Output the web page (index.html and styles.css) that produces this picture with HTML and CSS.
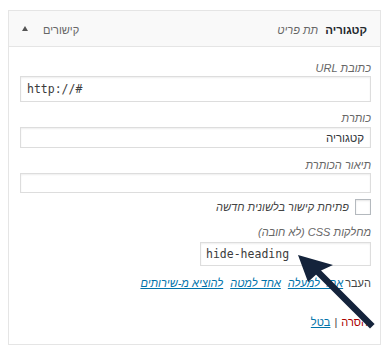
FILE: index.html
```html
<!DOCTYPE html>
<html lang="he">
<head>
<meta charset="utf-8">
<link rel="stylesheet" href="styles.css">
</head>
<body>
<div class="page">
  <div class="menu-item" dir="rtl">
    <div class="handle">
      <span class="item-title"><span class="item-name">קטגוריה</span><span class="item-sub">תת פריט</span></span>
      <span class="item-controls"><span class="item-type">קישורים</span><span class="toggle"></span></span>
    </div>
    <div class="settings">
      <div class="field">
        <label class="label">כתובת URL</label>
        <div class="input input-url mono">http://#</div>
      </div>
      <div class="field">
        <label class="label">כותרת</label>
        <div class="input input-title">קטגוריה</div>
      </div>
      <div class="field">
        <label class="label">תיאור הכותרת</label>
        <div class="input input-desc"></div>
      </div>
      <div class="check-row">
        <span class="checkbox"></span>
        <span class="check-label">פתיחת קישור בלשונית חדשה</span>
      </div>
      <div class="field">
        <label class="label">מחלקות CSS (לא חובה)</label>
        <div class="input input-css mono">hide-heading</div>
      </div>
      <div class="move-row">
        <span class="move-label">העבר</span>
        <a class="move-link">אחד למעלה</a>
        <a class="move-link">אחד למטה</a>
        <a class="move-link">להוציא מ-שירותים</a>
      </div>
      <div class="actions">
        <a class="delete">הסרה</a>
        <span class="sep">|</span>
        <a class="cancel">בטל</a>
      </div>
    </div>
  </div>
  <svg class="arrow" width="389" height="358" viewBox="0 0 389 358" xmlns="http://www.w3.org/2000/svg">
    <line x1="316" y1="270" x2="370" y2="324" stroke="#14233b" stroke-width="6.5" stroke-linecap="square"/>
    <polygon points="298,255 333,265 320,271 308,282" fill="#14233b"/>
  </svg>
</div>
</body>
</html>
```

FILE: styles.css
```css
html, body {
  margin: 0;
  padding: 0;
  background: #ffffff;
}

body {
  font-family: "Liberation Sans", Arial, sans-serif;
  font-size: 11px;
  color: #444;
}

.page {
  position: relative;
  width: 389px;
  height: 358px;
  padding: 10px 0 0 8px;
  box-sizing: border-box;
  direction: ltr;
}

.menu-item {
  width: 373px;
  direction: rtl;
}

.handle {
  display: flex;
  justify-content: space-between;
  align-items: center;
  height: 37px;
  box-sizing: border-box;
  padding: 2px 13px 0 13px;
  background: #f9f9f9;
  border: 1px solid #e5e5e5;
  line-height: 16px;
}

.item-title {
  display: flex;
  gap: 7px;
  align-items: baseline;
}

.item-name {
  font-weight: bold;
  color: #23282d;
  font-size: 11.5px;
}

.item-sub {
  font-style: italic;
  color: #666;
}

.item-controls {
  display: flex;
  align-items: center;
  gap: 15px;
}

.item-type {
  color: #666;
}

.toggle {
  width: 0;
  height: 0;
  border-left: 3.5px solid transparent;
  border-right: 3.5px solid transparent;
  border-bottom: 5px solid #555;
  margin-bottom: 2px;
}

.settings {
  height: 298px;
  box-sizing: border-box;
  border: 1px solid #e5e5e5;
  border-top: none;
  padding: 13px 9px 0 11px;
}

.field {
  display: flex;
  flex-direction: column;
  align-items: flex-start;
}

.label {
  display: block;
  font-style: italic;
  color: #666;
  line-height: 16px;
}

.input {
  box-sizing: border-box;
  border: 1px solid #ddd;
  box-shadow: inset 0 1px 2px rgba(0, 0, 0, 0.07);
  background: #fff;
  color: #32373c;
  padding: 0 6px;
  display: flex;
  align-items: center;
  width: 351px;
}

.mono {
  font-family: "DejaVu Sans Mono", "Liberation Mono", monospace;
  font-size: 11.5px;
  color: #3c3c3c;
  direction: ltr;
  justify-content: flex-start;
}

.input-url {
  height: 26px;
  margin-bottom: 8px;
}

.input-title {
  height: 21px;
  margin-top: 1px;
  margin-bottom: 9px;
  font-size: 11.5px;
}

.input-desc {
  height: 20px;
  margin-bottom: 6px;
}

.input-css {
  width: 171px;
  height: 24px;
  margin-top: 2px;
  margin-bottom: 9px;
  padding: 0 5px;
}

.check-row {
  display: flex;
  align-items: center;
  gap: 6px;
  height: 16px;
  margin-bottom: 9px;
}

.checkbox {
  width: 16px;
  height: 16px;
  box-sizing: border-box;
  border: 1px solid #b4b9be;
  background: #fff;
  box-shadow: inset 0 1px 2px rgba(0, 0, 0, 0.1);
}

.check-label {
  font-style: italic;
  color: #444;
}

.move-row {
  display: flex;
  align-items: center;
  gap: 7px;
  line-height: 16px;
}

.move-label {
  color: #444;
  margin-left: -5px;
}

.move-link {
  color: #0073aa;
  text-decoration: underline;
  font-style: italic;
}

.actions {
  display: flex;
  align-items: center;
  gap: 4px;
  margin-top: 23px;
  line-height: 16px;
  margin-right: 3px;
}

.delete {
  color: #a00;
}

.sep {
  color: #444;
}

.cancel {
  color: #0073aa;
  text-decoration: underline;
}

.arrow {
  position: absolute;
  left: 0;
  top: 0;
  pointer-events: none;
}
```
